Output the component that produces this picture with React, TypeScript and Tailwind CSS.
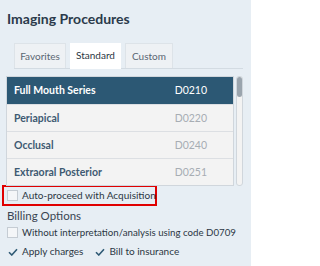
const rows = [
  { name: 'Full Mouth Series', code: 'D0210' },
  { name: 'Periapical', code: 'D0220' },
  { name: 'Occlusal', code: 'D0240' },
  { name: 'Extraoral Posterior', code: 'D0251' },
];

const Check = ({ checked }: { checked?: boolean }) =>
  checked ? (
    <span className="flex h-[11px] w-[11px] shrink-0 items-center justify-center">
      <svg width="10" height="8" viewBox="0 0 10 8" fill="none">
        <path d="M1 4.2 L3.8 7 L9 1.2" stroke="#2f5a75" strokeWidth="1.6" />
      </svg>
    </span>
  ) : (
    <span className="h-[11px] w-[11px] shrink-0 border border-[#c5ccd3] bg-[#f4f6f8]" />
  );

export default function App() {
  return (
    <div
      className="h-[266px] w-[251px] overflow-hidden whitespace-nowrap bg-[#e7eef4] text-[10px] leading-[13px] text-[#2b3643]"
      style={{ fontFamily: 'Lato, sans-serif' }}
    >
      <div className="pl-[7px] pt-[10px] text-[14px] font-bold leading-[18px] text-[#2b3a4b]">
        Imaging Procedures
      </div>

      <div className="ml-[14px] mr-[8px] mt-[15px] flex gap-[4px] border-b border-[#d3dbe2]">
        <div className="flex h-[25px] w-[52px] items-center justify-center border border-b-0 border-[#dde3e8] bg-[#eef1f4] text-[#5a6672]">
          Favorites
        </div>
        <div className="-mb-px flex h-[26px] w-[51px] items-center justify-center bg-white pb-px text-[#2b3643]">
          Standard
        </div>
        <div className="flex h-[25px] w-[48px] items-center justify-center border border-b-0 border-[#dde3e8] bg-[#eef1f4] text-[#5a6672]">
          Custom
        </div>
      </div>

      <div className="ml-[6px] mt-[7px] flex gap-[2px]">
        <div className="w-[228px] border border-[#d0d6dc] bg-[#f3f3f3] text-[10.5px]">
          {rows.map((r, i) => (
            <div
              key={r.code}
              className={`flex h-[27px] items-center justify-between pl-[7px] pr-[26px] font-bold ${
                i === 0
                  ? 'bg-[#2c5874] text-white'
                  : 'border-t border-[#dcdfe3] text-[#3e5a72]'
              }`}
            >
              <span>{r.name}</span>
              <span className={i === 0 ? 'font-normal text-white' : 'font-normal text-[#a7adb3]'}>
                {r.code}
              </span>
            </div>
          ))}
        </div>
        <div className="w-[7px] rounded-[3px] border border-[#d0d6dc] bg-[#f3f3f3]">
          <div className="h-[20px] rounded-[3px] bg-[#9aa4ad]" />
        </div>
      </div>

      <div className="ml-[2px] mt-[-1px] flex h-[21px] w-[155px] items-center gap-[4px] border-2 border-[#e00000] pl-[3px]">
        <Check />
        <span>Auto-proceed with Acquisition</span>
      </div>

      <div className="flex h-[17px] items-end pl-[7px] text-[11.5px] leading-[15px] text-[#3a4552]">
        Billing Options
      </div>

      <div className="flex h-[19px] items-center gap-[4px] pl-[7px] text-[9.7px]">
        <Check />
        <span>Without interpretation/analysis using code D0709</span>
      </div>

      <div className="flex h-[19px] items-center pl-[7px]">
        <Check checked />
        <span className="ml-[4px]">Apply charges</span>
        <span className="ml-[11px]">
          <Check checked />
        </span>
        <span className="ml-[4px]">Bill to insurance</span>
      </div>
    </div>
  );
}
